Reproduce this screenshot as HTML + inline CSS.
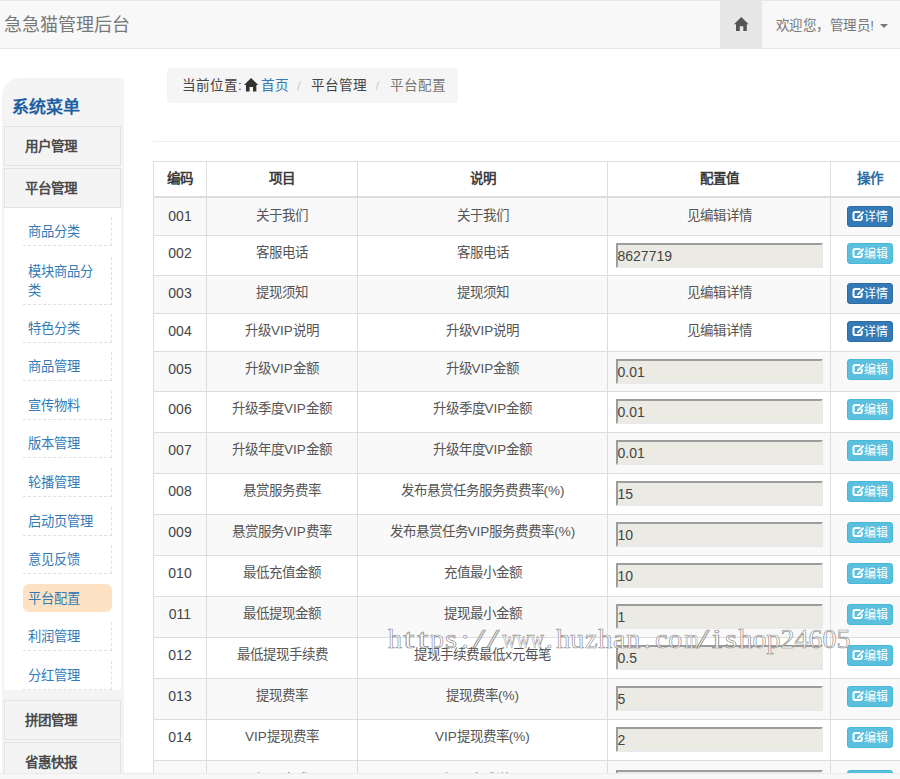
<!DOCTYPE html>
<html lang="zh-CN"><head><meta charset="utf-8">
<style>
*{box-sizing:border-box;margin:0;padding:0}
html,body{width:900px;height:779px;overflow:hidden;background:#fff}
body{font-family:"Liberation Sans",sans-serif;font-size:14px;line-height:20px;color:#333;position:relative}
.nav{position:absolute;left:0;top:0;width:900px;height:49px;background:#f8f8f8;border-top:1px solid #e7e7e7;border-bottom:1px solid #e7e7e7}
.brand{position:absolute;left:4px;top:14px;font-size:18px;line-height:20px;color:#777}
.homeact{position:absolute;left:720px;top:0;width:42px;height:47px;background:#e7e7e7}
.welcome{position:absolute;left:776px;top:15px;font-size:13.5px;letter-spacing:0.45px;color:#777;white-space:nowrap}
.caret{display:inline-block;width:0;height:0;border-top:4px solid #777;border-left:4px solid transparent;border-right:4px solid transparent;vertical-align:middle;margin-left:1px}
.side{position:absolute;left:2px;top:78px;width:122px;height:700px;background:#f4f4f4;border-radius:18px 4px 0 0}
.side h3{position:absolute;left:10px;top:17.5px;font-size:17px;line-height:24px;color:#1f5f9f;font-weight:bold}
.ph{position:absolute;left:2px;width:117px;height:40px;border:1px solid #e3e3e3;background:#f4f4f4;font-weight:bold;font-size:13.5px;color:#4a4a4a;padding-left:20px;line-height:39px}
.sub{position:absolute;left:2px;top:129.6px;width:117px;height:482.4px;background:#fff}
.it{position:absolute;left:21px;width:89px;border-right:1px dashed #e0e0e0;border-bottom:1px dashed #e0e0e0;color:#337ab7;font-size:13.3px;line-height:19px;padding:5px 0 4px 4.5px}
.it.act{background:#fde3c3;border:none;border-radius:6px}
.bc{position:absolute;left:167px;top:68px;width:291px;height:35px;background:#f5f5f5;border-radius:4px}
.bct{position:absolute;top:76px;line-height:20px;font-size:13.6px;white-space:nowrap;color:#444}
.bc .sep{color:#ccc;padding:0 8px}
.hr{position:absolute;left:153px;top:141px;width:747px;height:1px;background:#eee}
table{position:absolute;left:153px;top:161px;border-collapse:separate;border-spacing:0;table-layout:fixed;width:755px;border-left:1px solid #ddd}
td,th{border-top:1px solid #ddd;border-right:1px solid #ddd;text-align:center;vertical-align:top;padding:7px 8px 0;white-space:nowrap;overflow:hidden}
th{vertical-align:middle;padding:0 8px}
td{font-size:13.5px;color:#555}
td:first-child{font-size:14px;color:#444}
tr.r1 td{padding-top:8px}
tr.last td{padding-top:8.5px}
th{font-weight:bold;height:37px;font-size:13.5px;color:#3c3c3c}
tr.h th{border-bottom:2px solid #ddd}
tr.r1 td{border-top:none}
tr.s td{background:#f9f9f9}
.inp{display:block;width:207px;height:25px;margin-left:0;border:2px solid;border-color:#9d9d9d #e9e9e9 #e9e9e9 #9d9d9d;background:#ebebe4;font-family:"Liberation Sans",sans-serif;font-size:14px;text-align:left;padding-left:0;line-height:22px;color:#444;text-indent:-0.5px}
.btn{display:inline-block;position:relative;top:0;height:21px;line-height:18px;padding:1px 4px 0;font-size:12px;color:#fff;border-radius:3px;border:1px solid;white-space:nowrap}
.bp{background:#337ab7;border-color:#2e6da4}
.bi{background:#5bc0de;border-color:#46b8da}
.bottom{position:absolute;left:0;top:773px;width:900px;height:6px;background:#f7f7f7;border-top:1px solid #ebebeb}
.wm{position:absolute;left:388px;top:624px;font-family:"Liberation Serif",serif;font-size:28px;line-height:30px;color:rgba(255,255,255,0.8);-webkit-text-stroke:0.7px rgba(115,115,115,0.8);white-space:nowrap}
.wm b{display:inline-block;width:14.03px;text-align:center;font-weight:normal}
</style></head><body>
<div class="nav">
  <div class="brand">急急猫管理后台</div>
  <div class="homeact"><svg style="position:absolute;left:14px;top:16px" width="15" height="14" viewBox="0 0 15 14"><path d="M0 7.2L7.3 0L14.7 7.2L12.8 7.2L12.8 14L9.3 14L9.3 9.3L5.8 9.3L5.8 14L2 14L2 7.2Z" fill="#555"/></svg></div>
  <div class="welcome">欢迎您，管理员! <span class="caret"></span></div>
</div>

<div class="side">
  <h3>系统菜单</h3>
  <div class="ph" style="top:48px">用户管理</div>
  <div class="ph" style="top:90px">平台管理</div>
  <div class="sub"></div>
<div class="it" style="top:139px">商品分类</div>
<div class="it" style="top:179px">模块商品分<br>类</div>
<div class="it" style="top:236px">特色分类</div>
<div class="it" style="top:274px">商品管理</div>
<div class="it" style="top:313px">宣传物料</div>
<div class="it" style="top:351px">版本管理</div>
<div class="it" style="top:390px">轮播管理</div>
<div class="it" style="top:429px">启动页管理</div>
<div class="it" style="top:467px">意见反馈</div>
<div class="it act" style="top:506px">平台配置</div>
<div class="it" style="top:544px">利润管理</div>
<div class="it" style="top:583px">分红管理</div>
  <div class="ph" style="top:622px">拼团管理</div>
  <div class="ph" style="top:664px">省惠快报</div>
</div>

<div class="bc"></div><div class="bct" style="left:182px">当前位置:</div><svg style="position:absolute;left:243.5px;top:78px" width="14.5" height="13.5" viewBox="0 0 15 14"><path d="M0 7.2L7.3 0L14.7 7.2L12.8 7.2L12.8 14L9.3 14L9.3 9.3L5.8 9.3L5.8 14L2 14L2 7.2Z" fill="#333"/></svg><div class="bct" style="left:261px;color:#337ab7">首页</div><div class="bct" style="left:297px;color:#ccc">/</div><div class="bct" style="left:311px">平台管理</div><div class="bct" style="left:375.5px;color:#ccc">/</div><div class="bct" style="left:389.5px;color:#777">平台配置</div>
<div class="hr"></div>

<table>
<colgroup><col style="width:53px"><col style="width:151px"><col style="width:250px"><col style="width:223px"><col style="width:78px"></colgroup>
<tr class="h"><th>编码</th><th>项目</th><th>说明</th><th>配置值</th><th style="color:#2b6ca3">操作</th></tr>
<tr class="r1 s" style="height:37px"><td>001</td><td>关于我们</td><td>关于我们</td><td>见编辑详情</td><td><span class="btn bp"><svg class="ic" width="12" height="12" viewBox="0 0 12 12" style="vertical-align:-1px;overflow:visible"><path d="M8.4 2.1H3.3Q1.5 2.1 1.5 3.9V8.2Q1.5 10 3.3 10H8Q9.8 10 9.8 8.2V5.8" fill="none" stroke="#fff" stroke-width="2"/><path d="M4.9 8.3L5.3 6.7L10.9 1.1L12.2 2.4L6.6 8Z" fill="#fff"/></svg>详情</span></td></tr>
<tr class="" style="height:40px"><td>002</td><td>客服电话</td><td>客服电话</td><td><div class="inp">8627719</div></td><td><span class="btn bi"><svg class="ic" width="12" height="12" viewBox="0 0 12 12" style="vertical-align:-1px;overflow:visible"><path d="M8.4 2.1H3.3Q1.5 2.1 1.5 3.9V8.2Q1.5 10 3.3 10H8Q9.8 10 9.8 8.2V5.8" fill="none" stroke="#fff" stroke-width="2"/><path d="M4.9 8.3L5.3 6.7L10.9 1.1L12.2 2.4L6.6 8Z" fill="#fff"/></svg>编辑</span></td></tr>
<tr class="s" style="height:38px"><td>003</td><td>提现须知</td><td>提现须知</td><td>见编辑详情</td><td><span class="btn bp"><svg class="ic" width="12" height="12" viewBox="0 0 12 12" style="vertical-align:-1px;overflow:visible"><path d="M8.4 2.1H3.3Q1.5 2.1 1.5 3.9V8.2Q1.5 10 3.3 10H8Q9.8 10 9.8 8.2V5.8" fill="none" stroke="#fff" stroke-width="2"/><path d="M4.9 8.3L5.3 6.7L10.9 1.1L12.2 2.4L6.6 8Z" fill="#fff"/></svg>详情</span></td></tr>
<tr class="" style="height:38px"><td>004</td><td>升级VIP说明</td><td>升级VIP说明</td><td>见编辑详情</td><td><span class="btn bp"><svg class="ic" width="12" height="12" viewBox="0 0 12 12" style="vertical-align:-1px;overflow:visible"><path d="M8.4 2.1H3.3Q1.5 2.1 1.5 3.9V8.2Q1.5 10 3.3 10H8Q9.8 10 9.8 8.2V5.8" fill="none" stroke="#fff" stroke-width="2"/><path d="M4.9 8.3L5.3 6.7L10.9 1.1L12.2 2.4L6.6 8Z" fill="#fff"/></svg>详情</span></td></tr>
<tr class="s" style="height:40px"><td>005</td><td>升级VIP金额</td><td>升级VIP金额</td><td><div class="inp">0.01</div></td><td><span class="btn bi"><svg class="ic" width="12" height="12" viewBox="0 0 12 12" style="vertical-align:-1px;overflow:visible"><path d="M8.4 2.1H3.3Q1.5 2.1 1.5 3.9V8.2Q1.5 10 3.3 10H8Q9.8 10 9.8 8.2V5.8" fill="none" stroke="#fff" stroke-width="2"/><path d="M4.9 8.3L5.3 6.7L10.9 1.1L12.2 2.4L6.6 8Z" fill="#fff"/></svg>编辑</span></td></tr>
<tr class="" style="height:41px"><td>006</td><td>升级季度VIP金额</td><td>升级季度VIP金额</td><td><div class="inp">0.01</div></td><td><span class="btn bi"><svg class="ic" width="12" height="12" viewBox="0 0 12 12" style="vertical-align:-1px;overflow:visible"><path d="M8.4 2.1H3.3Q1.5 2.1 1.5 3.9V8.2Q1.5 10 3.3 10H8Q9.8 10 9.8 8.2V5.8" fill="none" stroke="#fff" stroke-width="2"/><path d="M4.9 8.3L5.3 6.7L10.9 1.1L12.2 2.4L6.6 8Z" fill="#fff"/></svg>编辑</span></td></tr>
<tr class="s" style="height:41px"><td>007</td><td>升级年度VIP金额</td><td>升级年度VIP金额</td><td><div class="inp">0.01</div></td><td><span class="btn bi"><svg class="ic" width="12" height="12" viewBox="0 0 12 12" style="vertical-align:-1px;overflow:visible"><path d="M8.4 2.1H3.3Q1.5 2.1 1.5 3.9V8.2Q1.5 10 3.3 10H8Q9.8 10 9.8 8.2V5.8" fill="none" stroke="#fff" stroke-width="2"/><path d="M4.9 8.3L5.3 6.7L10.9 1.1L12.2 2.4L6.6 8Z" fill="#fff"/></svg>编辑</span></td></tr>
<tr class="" style="height:41px"><td>008</td><td>悬赏服务费率</td><td>发布悬赏任务服务费费率(%)</td><td><div class="inp">15</div></td><td><span class="btn bi"><svg class="ic" width="12" height="12" viewBox="0 0 12 12" style="vertical-align:-1px;overflow:visible"><path d="M8.4 2.1H3.3Q1.5 2.1 1.5 3.9V8.2Q1.5 10 3.3 10H8Q9.8 10 9.8 8.2V5.8" fill="none" stroke="#fff" stroke-width="2"/><path d="M4.9 8.3L5.3 6.7L10.9 1.1L12.2 2.4L6.6 8Z" fill="#fff"/></svg>编辑</span></td></tr>
<tr class="s" style="height:41px"><td>009</td><td>悬赏服务VIP费率</td><td>发布悬赏任务VIP服务费费率(%)</td><td><div class="inp">10</div></td><td><span class="btn bi"><svg class="ic" width="12" height="12" viewBox="0 0 12 12" style="vertical-align:-1px;overflow:visible"><path d="M8.4 2.1H3.3Q1.5 2.1 1.5 3.9V8.2Q1.5 10 3.3 10H8Q9.8 10 9.8 8.2V5.8" fill="none" stroke="#fff" stroke-width="2"/><path d="M4.9 8.3L5.3 6.7L10.9 1.1L12.2 2.4L6.6 8Z" fill="#fff"/></svg>编辑</span></td></tr>
<tr class="" style="height:41px"><td>010</td><td>最低充值金额</td><td>充值最小金额</td><td><div class="inp">10</div></td><td><span class="btn bi"><svg class="ic" width="12" height="12" viewBox="0 0 12 12" style="vertical-align:-1px;overflow:visible"><path d="M8.4 2.1H3.3Q1.5 2.1 1.5 3.9V8.2Q1.5 10 3.3 10H8Q9.8 10 9.8 8.2V5.8" fill="none" stroke="#fff" stroke-width="2"/><path d="M4.9 8.3L5.3 6.7L10.9 1.1L12.2 2.4L6.6 8Z" fill="#fff"/></svg>编辑</span></td></tr>
<tr class="s" style="height:41px"><td>011</td><td>最低提现金额</td><td>提现最小金额</td><td><div class="inp">1</div></td><td><span class="btn bi"><svg class="ic" width="12" height="12" viewBox="0 0 12 12" style="vertical-align:-1px;overflow:visible"><path d="M8.4 2.1H3.3Q1.5 2.1 1.5 3.9V8.2Q1.5 10 3.3 10H8Q9.8 10 9.8 8.2V5.8" fill="none" stroke="#fff" stroke-width="2"/><path d="M4.9 8.3L5.3 6.7L10.9 1.1L12.2 2.4L6.6 8Z" fill="#fff"/></svg>编辑</span></td></tr>
<tr class="" style="height:41px"><td>012</td><td>最低提现手续费</td><td>提现手续费最低x元每笔</td><td><div class="inp">0.5</div></td><td><span class="btn bi"><svg class="ic" width="12" height="12" viewBox="0 0 12 12" style="vertical-align:-1px;overflow:visible"><path d="M8.4 2.1H3.3Q1.5 2.1 1.5 3.9V8.2Q1.5 10 3.3 10H8Q9.8 10 9.8 8.2V5.8" fill="none" stroke="#fff" stroke-width="2"/><path d="M4.9 8.3L5.3 6.7L10.9 1.1L12.2 2.4L6.6 8Z" fill="#fff"/></svg>编辑</span></td></tr>
<tr class="s" style="height:41px"><td>013</td><td>提现费率</td><td>提现费率(%)</td><td><div class="inp">5</div></td><td><span class="btn bi"><svg class="ic" width="12" height="12" viewBox="0 0 12 12" style="vertical-align:-1px;overflow:visible"><path d="M8.4 2.1H3.3Q1.5 2.1 1.5 3.9V8.2Q1.5 10 3.3 10H8Q9.8 10 9.8 8.2V5.8" fill="none" stroke="#fff" stroke-width="2"/><path d="M4.9 8.3L5.3 6.7L10.9 1.1L12.2 2.4L6.6 8Z" fill="#fff"/></svg>编辑</span></td></tr>
<tr class="" style="height:41px"><td>014</td><td>VIP提现费率</td><td>VIP提现费率(%)</td><td><div class="inp">2</div></td><td><span class="btn bi"><svg class="ic" width="12" height="12" viewBox="0 0 12 12" style="vertical-align:-1px;overflow:visible"><path d="M8.4 2.1H3.3Q1.5 2.1 1.5 3.9V8.2Q1.5 10 3.3 10H8Q9.8 10 9.8 8.2V5.8" fill="none" stroke="#fff" stroke-width="2"/><path d="M4.9 8.3L5.3 6.7L10.9 1.1L12.2 2.4L6.6 8Z" fill="#fff"/></svg>编辑</span></td></tr>
<tr class="s last" style="height:41px"><td>015</td><td>提现方式</td><td>提现方式说明</td><td><div class="inp">1</div></td><td><span class="btn bi"><svg class="ic" width="12" height="12" viewBox="0 0 12 12" style="vertical-align:-1px;overflow:visible"><path d="M8.4 2.1H3.3Q1.5 2.1 1.5 3.9V8.2Q1.5 10 3.3 10H8Q9.8 10 9.8 8.2V5.8" fill="none" stroke="#fff" stroke-width="2"/><path d="M4.9 8.3L5.3 6.7L10.9 1.1L12.2 2.4L6.6 8Z" fill="#fff"/></svg>编辑</span></td></tr>
</table>

<div class="bottom"></div>
<div class="wm"><b>h</b><b style="transform:scaleX(1.45)">t</b><b style="transform:scaleX(1.45)">t</b><b>p</b><b style="transform:scaleX(1.1)">s</b><b>:</b><b style="transform:scaleX(1.6)">/</b><b style="transform:scaleX(1.6)">/</b><b style="transform:scaleX(0.68)">w</b><b style="transform:scaleX(0.68)">w</b><b style="transform:scaleX(0.68)">w</b><b>.</b><b>h</b><b>u</b><b>z</b><b>h</b><b>a</b><b>n</b><b>.</b><b>c</b><b>o</b><b style="transform:scaleX(0.64)">m</b><b style="transform:scaleX(1.6)">/</b><b style="transform:scaleX(1.35)">i</b><b style="transform:scaleX(1.1)">s</b><b>h</b><b>o</b><b>p</b><b>2</b><b>4</b><b>6</b><b>0</b><b>5</b></div>
</body></html>
